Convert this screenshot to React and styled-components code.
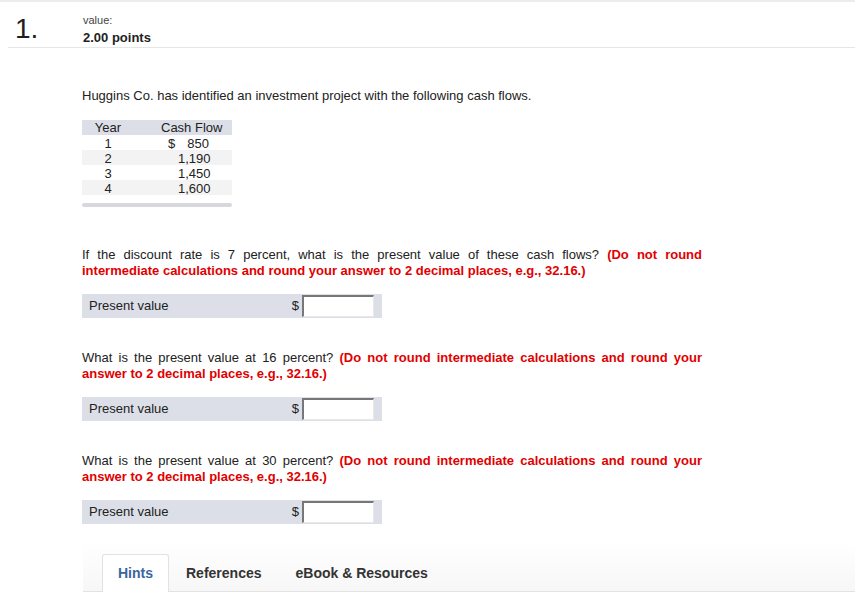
import React from "react";
import styled, { createGlobalStyle } from "styled-components";

const Global = createGlobalStyle`
  body {
    margin: 0;
    background: #fff;
    font-family: "Liberation Sans", Arial, sans-serif;
    color: #222;
  }
`;

const Page = styled.div`
  width: 855px;
  height: 592px;
  overflow: hidden;
  border-top: 2px solid #ececec;
  box-sizing: border-box;
`;

const Header = styled.div`
  display: flex;
  align-items: flex-start;
  margin-left: 8px;
  height: 45px;
  border-bottom: 1px solid #e6e6e6;
`;

const Number = styled.div`
  width: 75px;
  box-sizing: border-box;
  padding-left: 7px;
  padding-top: 12px;
  font-size: 28px;
  line-height: 30px;
  color: #1e1e1e;
`;

const Value = styled.div`
  padding-top: 12px;
  & > span {
    display: block;
    font-size: 11px;
    line-height: 13px;
    color: #444;
  }
  & > strong {
    display: block;
    font-size: 13px;
    line-height: 17px;
    margin-top: 2px;
    font-weight: bold;
    color: #222;
  }
`;

const Body = styled.div`
  padding-left: 82px;
  width: 620px;
  font-size: 13px;
  line-height: 16px;
`;

const Intro = styled.p`
  margin: 40px 0 0;
`;

const Table = styled.div`
  margin-top: 16px;
  width: 150px;
  display: flex;
  flex-direction: column;
`;

const Row = styled.div`
  display: grid;
  grid-template-columns: 52px 98px;
  height: ${(p) => (p.$head ? "15px" : "15px")};
  line-height: ${(p) => (p.$head ? "15px" : "17px")};
  font-size: 13px;
  background: ${(p) => (p.$head ? "#dcdfe7" : p.$shade ? "#f3f3f3" : "transparent")};
  color: #222;
  & > span:first-child {
    text-align: center;
  }
  & > span:last-child {
    padding-left: ${(p) => (p.$head ? "27px" : "34px")};
  }
`;

const Amount = styled.span`
  display: flex;
  white-space: pre;
`;

const Sign = styled.span`
  width: 10px;
`;

const Figure = styled.span`
  width: 31px;
  text-align: right;
`;

const TableFoot = styled.div`
  margin-top: 8px;
  width: 150px;
  height: 4px;
  border-radius: 2px;
  background: #d6d8de;
`;

const Question = styled.p`
  margin: ${(p) => p.$top}px 0 0;
  text-align: justify;
  text-align-last: left;
  & > b {
    color: #e10000;
  }
`;

const AnswerBar = styled.div`
  margin-top: 15px;
  width: 300px;
  height: 24px;
  display: flex;
  align-items: center;
  background: #dcdfe7;
  font-size: 13px;
`;

const Label = styled.span`
  flex: 1;
  padding-left: 7px;
  color: #222;
`;

const Dollar = styled.span`
  margin-right: 3px;
`;

const Input = styled.input`
  width: 72px;
  height: 22px;
  box-sizing: border-box;
  margin: 0 8px 0 0;
  border: none;
  border-top: 2px solid #777;
  border-left: 2px solid #777;
  border-right: 1px solid #e8e8e8;
  border-bottom: 1px solid #e8e8e8;
  background: #fff;
  outline: none;
`;

const TabStrip = styled.div`
  margin: 17px 0 0 83px;
  height: 50px;
  display: flex;
  align-items: flex-end;
  border-bottom: 1px solid #e2e2e2;
  background: linear-gradient(#fff, #f7f7f7);
`;

const Tab = styled.div`
  height: 38px;
  box-sizing: border-box;
  display: flex;
  align-items: center;
  padding: 0 ${(p) => (p.$active ? "15px" : "16px")};
  margin-left: ${(p) => (p.$first ? "19px" : "0")};
  font-size: 14px;
  font-weight: bold;
  color: ${(p) => (p.$active ? "#3a66a0" : "#333")};
  background: ${(p) => (p.$active ? "#fff" : "transparent")};
  border: ${(p) => (p.$active ? "1px solid #e2e2e2" : "1px solid transparent")};
  border-bottom: none;
  border-radius: 3px 3px 0 0;
  margin-bottom: -1px;
  padding-bottom: 1px;
`;

const flows = [
  ["1", "$", "850"],
  ["2", "", "1,190"],
  ["3", "", "1,450"],
  ["4", "", "1,600"],
];

const questions = [
  {
    top: 40,
    text: "If the discount rate is 7 percent, what is the present value of these cash flows? ",
  },
  { top: 32, text: "What is the present value at 16 percent? " },
  { top: 32, text: "What is the present value at 30 percent? " },
];

export default function App() {
  return (
    <Page>
      <Global />
      <Header>
        <Number>1.</Number>
        <Value>
          <span>value:</span>
          <strong>2.00 points</strong>
        </Value>
      </Header>
      <Body>
        <Intro>Huggins Co. has identified an investment project with the following cash flows.</Intro>
        <Table>
          <Row $head>
            <span>Year</span>
            <span>Cash Flow</span>
          </Row>
          {flows.map(([y, sign, v], i) => (
            <Row key={y} $shade={i % 2 === 1}>
              <span>{y}</span>
              <Amount>
                <Sign>{sign}</Sign>
                <Figure>{v}</Figure>
              </Amount>
            </Row>
          ))}
        </Table>
        <TableFoot />
        {questions.map((q, i) => (
          <React.Fragment key={i}>
            <Question $top={q.top}>
              {q.text}
              <b>
                (Do not round intermediate calculations and round your answer to 2 decimal places, e.g.,
                32.16.)
              </b>
            </Question>
            <AnswerBar>
              <Label>Present value</Label>
              <Dollar>$</Dollar>
              <Input />
            </AnswerBar>
          </React.Fragment>
        ))}
      </Body>
      <TabStrip>
        <Tab $active $first>
          Hints
        </Tab>
        <Tab>References</Tab>
        <Tab>eBook &amp; Resources</Tab>
      </TabStrip>
    </Page>
  );
}
